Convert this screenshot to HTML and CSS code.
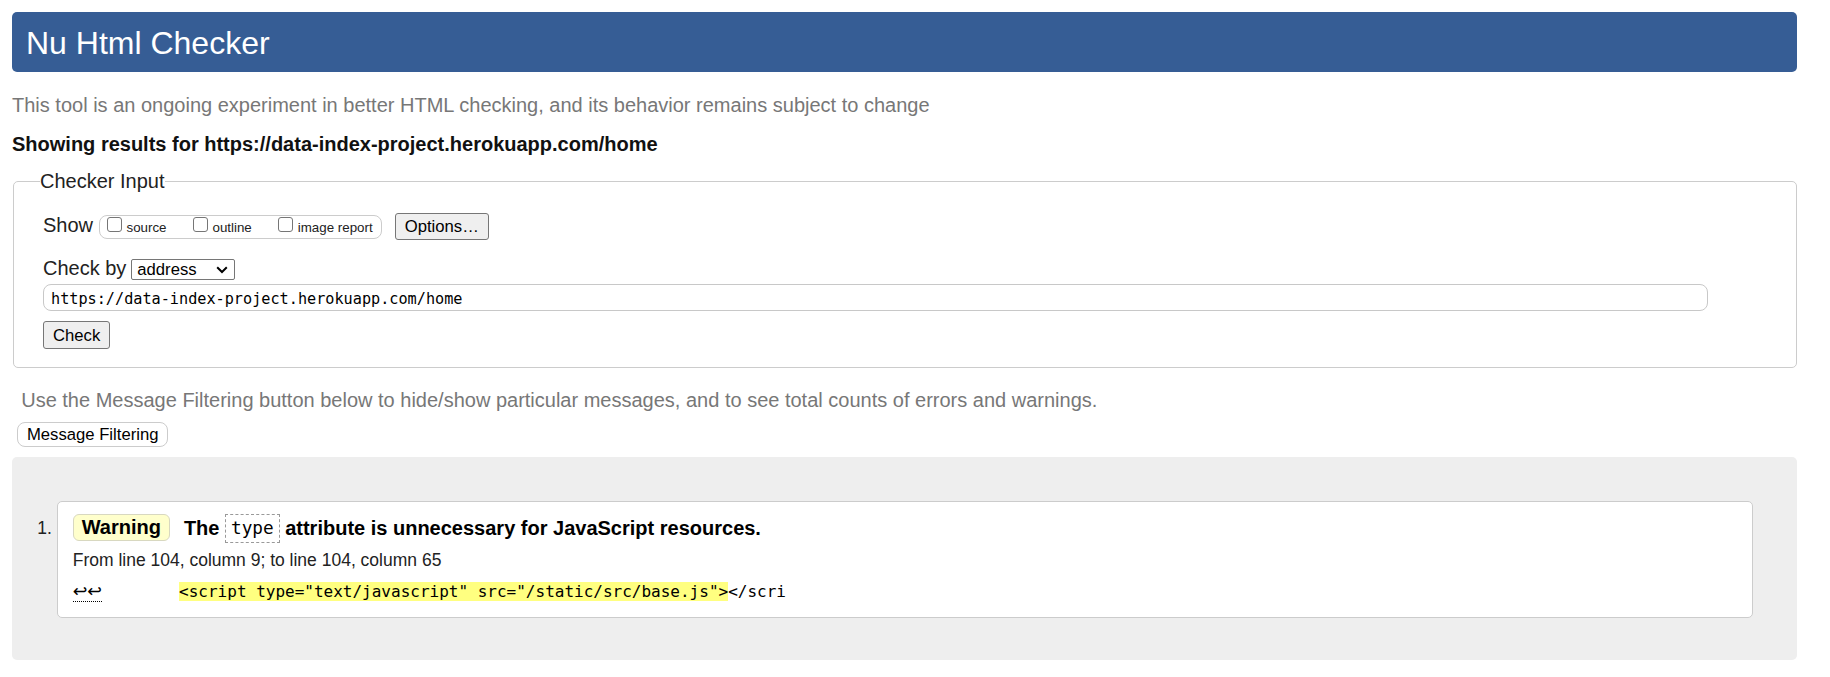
FILE: index.html
```html
<!DOCTYPE html>
<html lang="en">
<head>
<meta charset="utf-8">
<title>Showing results for https://data-index-project.herokuapp.com/home - Nu Html Checker</title>
<link rel="stylesheet" href="styles.css">
</head>
<body>
<h1 class="banner">Nu Html Checker</h1>
<p class="about">This tool is an ongoing experiment in better HTML checking, and its behavior remains subject to change</p>
<p class="showing">Showing results for https://data-index-project.herokuapp.com/home</p>
<form class="checker-form">
  <fieldset class="checker">
    <legend class="legend">Checker Input</legend>
    <div class="row show-row"><span class="lbl">Show</span> <span class="show-box"><label class="opt"><input type="checkbox" class="cb">source</label><label class="opt"><input type="checkbox" class="cb">outline</label><label class="opt last"><input type="checkbox" class="cb">image report</label></span> <button type="button" class="btn options">Options…</button></div>
    <div class="row by-row"><span class="lbl">Check by</span> <span class="select"><span class="select-text">address</span><svg class="chev" width="12" height="8" viewBox="0 0 12 8"><path d="M1.2 1.3 L6 6 L10.8 1.3" fill="none" stroke="#000" stroke-width="2"/></svg></span></div>
    <input class="url" type="url" value="https://data-index-project.herokuapp.com/home">
    <button type="button" class="btn check">Check</button>
  </fieldset>
</form>
<p class="filter-note">Use the Message Filtering button below to hide/show particular messages, and to see total counts of errors and warnings.</p>
<button type="button" class="filter-btn">Message Filtering</button>
<ol class="results">
  <li class="msg">
    <div class="msg-title"><strong class="badge">Warning</strong> The <code class="type">type</code> attribute is unnecessary for JavaScript resources.</div>
    <p class="loc">From line 104, column 9; to line 104, column 65</p>
    <p class="extract"><span class="lf">↩↩</span>        <mark class="hl">&lt;script type="text/javascript" src="/static/src/base.js"&gt;</mark>&lt;/scri</p>
  </li>
</ol>
</body>
</html>
```

FILE: styles.css
```css
* {
  box-sizing: border-box;
}

html,
body {
  margin: 0;
  background: #fff;
}

body {
  font-family: "Liberation Sans", Arial, sans-serif;
  font-size: 20px;
  line-height: 23px;
  color: #222;
  padding: 12px 33px 8px 12px;
}

.banner {
  margin: 0;
  background: #365d95;
  color: #fff;
  border-radius: 5px;
  padding: 13px 12px 11px 14px;
  font-size: 32px;
  line-height: 36px;
  font-weight: normal;
}

.about {
  margin: 22px 0 0;
  color: #777;
}

.showing {
  margin: 16px 0 0;
  font-weight: bold;
  color: #111;
}

.checker-form {
  margin: 14px 0 0;
}

.checker {
  margin: 0 0 0 1px;
  min-width: 0;
  border: 1px solid #cccccc;
  border-radius: 5px;
  padding: 19.5px 29px 18.6px 29px;
}

.legend {
  padding: 0;
  margin-left: -3px;
  font-size: 20px;
  line-height: 23px;
  color: #222;
}

.row {
  line-height: 23px;
}

.by-row {
  margin-top: 17px;
}

.show-box {
  display: inline-block;
  vertical-align: baseline;
  border: 1px solid #cccccc;
  border-radius: 8px;
  padding: 0.4px 8px 3.3px 7.4px;
  font-size: 13.33px;
  line-height: 15px;
  color: #222;
}

.opt {
  margin-right: 26.5px;
}

.opt.last {
  margin-right: 0;
}

.cb {
  -webkit-appearance: none;
  appearance: none;
  display: inline-block;
  width: 15px;
  height: 15px;
  margin: 0 4.5px 0 0;
  border: 1px solid #767676;
  border-radius: 3px;
  background: #fff;
  vertical-align: baseline;
}

.btn {
  font-family: "Liberation Sans", Arial, sans-serif;
  font-size: 16.67px;
  line-height: 19.2px;
  padding: 3.1px 9.2px;
  border: 1px solid #767676;
  border-radius: 3px;
  background: #efefef;
  color: #000;
  vertical-align: baseline;
}

.options {
  margin-left: 7.4px;
}

.check {
  display: block;
  margin-top: 10.6px;
  padding: 3.1px 9px;
}

.select {
  display: inline-flex;
  align-items: center;
  justify-content: space-between;
  width: 104.4px;
  height: 21.6px;
  margin-left: -1px;
  border: 1px solid #767676;
  border-radius: 2px;
  padding: 0 6px 0 5.4px;
  font-size: 16.67px;
  line-height: 19.6px;
  color: #000;
  vertical-align: baseline;
}

.chev {
  display: block;
}

.url {
  display: block;
  width: 96.6%;
  height: 26.7px;
  margin: 3.7px 0 0;
  border: 1px solid #c8c8c8;
  border-radius: 8px;
  padding: 3px 7px 0;
  font-family: "DejaVu Sans Mono", monospace;
  font-size: 15.2px;
  color: #000;
  background: #fff;
  outline: none;
}

.filter-note {
  margin: 20.3px 0 0;
  padding-left: 9.2px;
  color: #777;
}

.filter-btn {
  display: block;
  margin: 10.7px 0 0 5.3px;
  background: #fff;
  border: 1px solid #cccccc;
  border-radius: 8px;
  padding: 1.6px 8.7px;
  font-family: "Liberation Sans", Arial, sans-serif;
  font-size: 16.67px;
  line-height: 19.2px;
  color: #000;
}

.results {
  margin: 10.6px 0 0;
  list-style: decimal;
  background: #eeeeee;
  border-radius: 5px;
  padding: 43.4px 44px 42.4px 44.7px;
}

.msg {
  border: 1px solid #cccccc;
  border-radius: 5px;
  background: #fff;
  padding: 12px 15px 14.5px;
  font-size: 17.5px;
  line-height: 20px;
  color: #222;
}

.msg-title {
  font-size: 20px;
  line-height: 23px;
  font-weight: bold;
  color: #000;
}

.badge {
  display: inline-block;
  background: #ffffcc;
  border: 1px solid #d8d8c0;
  border-radius: 6px;
  padding: 1px 8px;
  margin-right: 8.4px;
  line-height: 23px;
}

.type {
  display: inline-block;
  font-family: "DejaVu Sans Mono", monospace;
  font-weight: normal;
  font-size: 17.7px;
  line-height: normal;
  border: 1px dashed #999;
  padding: 3.7px 5px;
}

.loc {
  margin: 7px 0 0;
}

.extract {
  margin: 11px 0 0;
  font-family: "DejaVu Sans Mono", monospace;
  font-size: 16px;
  line-height: 20px;
  white-space: pre;
  color: #000;
}

.lf {
  font-family: "DejaVu Sans", sans-serif;
  font-size: 17.5px;
  font-weight: normal;
  border-bottom: 1px dotted #000;
}

.hl {
  background: #ffff80;
  color: inherit;
}
```
